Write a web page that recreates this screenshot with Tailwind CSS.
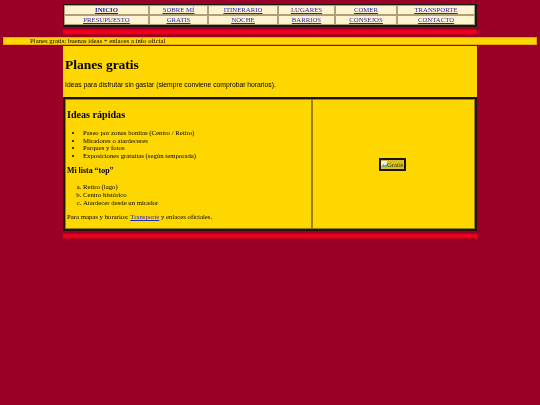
<!DOCTYPE html>
<html lang="es">
<head>
<meta charset="UTF-8">
<script src="https://cdn.jsdelivr.net/npm/@tailwindcss/browser@4"></script>
<title>Planes gratis</title>
</head>
<body class="bg-[#990026] font-['Liberation_Serif',serif] text-[6.75px] leading-[7.6px] text-black min-h-[405px]">
<div class="pt-1 blur-[0.25px]">
  <!-- menu -->
  <nav class="mx-auto w-[414px] h-[23px] border border-[#1a1414] border-r-2 border-b-2 bg-[#b0a078] p-px grid grid-cols-[83px_57px_68px_55px_60px_1fr] gap-0.5 text-center text-[#2a2ab8] underline">
    <a class="bg-[#fff3d0] font-bold text-[#1a1ab0] flex items-center justify-center">INICIO</a>
    <a class="bg-[#fff3d0] flex items-center justify-center">SOBRE MÍ</a>
    <a class="bg-[#fff3d0] flex items-center justify-center">ITINERARIO</a>
    <a class="bg-[#fff3d0] flex items-center justify-center">LUGARES</a>
    <a class="bg-[#fff3d0] flex items-center justify-center">COMER</a>
    <a class="bg-[#fff3d0] flex items-center justify-center">TRANSPORTE</a>
    <a class="bg-[#fff3d0] flex items-center justify-center">PRESUPUESTO</a>
    <a class="bg-[#fff3d0] flex items-center justify-center">GRATIS</a>
    <a class="bg-[#fff3d0] flex items-center justify-center">NOCHE</a>
    <a class="bg-[#fff3d0] flex items-center justify-center">BARRIOS</a>
    <a class="bg-[#fff3d0] flex items-center justify-center">CONSEJOS</a>
    <a class="bg-[#fff3d0] flex items-center justify-center">CONTACTO</a>
  </nav>
  <div class="mx-auto mt-0.5 w-[414px] h-[6px] bg-[#e8001c] border-y border-[#b8001c]"></div>
  <!-- aviso -->
  <div class="mx-[3px] mt-0.5 h-2 bg-[#ffd700] border border-[#f0a000] pl-[26px] leading-[6px] whitespace-nowrap">Planes gratis: buenas ideas + enlaces a info oficial</div>
  <!-- contenido -->
  <main class="mx-auto mt-px w-[414px] bg-[#ffd700]">
    <div class="h-[51px] px-0.5 pt-[11px]">
      <h1 class="font-bold text-[13.5px] leading-4">Planes gratis</h1>
      <p class="mt-[8px] font-['Liberation_Sans',sans-serif] text-[6.75px] leading-2">Ideas para disfrutar sin gastar (siempre conviene comprobar horarios).</p>
    </div>
    <div class="h-[134px] border-2 border-[#1a1400] bg-[#9a8200] p-px flex gap-0.5">
      <section class="w-[245px] bg-[#ffd700] pl-px pt-[9px]">
        <h2 class="font-bold text-[10.1px] leading-[12px]">Ideas rápidas</h2>
        <ul class="mt-2 pl-4 list-disc">
          <li>Paseo por zonas bonitas (Centro / Retiro)</li>
          <li>Miradores o atardeceres</li>
          <li>Parques y fotos</li>
          <li>Exposiciones gratuitas (según temporada)</li>
        </ul>
        <h3 class="mt-[7px] font-bold text-[7.9px] leading-[9px]">Mi lista “top”</h3>
        <ol class="mt-2 pl-4 list-[lower-alpha]">
          <li>Retiro (lago)</li>
          <li>Centro histórico</li>
          <li>Atardecer desde un mirador</li>
        </ol>
        <p class="mt-[7px]">Para mapas y horarios: <a class="underline text-[#2a2ab8]">Transporte</a> y enlaces oficiales.</p>
      </section>
      <section class="flex-1 bg-[#ffd700] flex items-center justify-center pr-[2px]">
        <span class="border-2 border-[#1a1400] h-[13px] w-[27px] flex items-center overflow-hidden bg-[#d8c020] text-[#3a3000]">
          <svg width="6" height="6" viewBox="0 0 8 8" class="shrink-0"><rect width="8" height="8" fill="#e8eef4"/><path d="M0 8 3 4l2 2 3-2v4z" fill="#7da860"/></svg>
          <span class="leading-[7px]">Gratis</span>
        </span>
      </section>
    </div>
  </main>
  <div class="mx-auto mt-0.5 w-[414px] h-[6px] bg-[#e8001c] border-y border-[#b8001c]"></div>
</div>
</body>
</html>
